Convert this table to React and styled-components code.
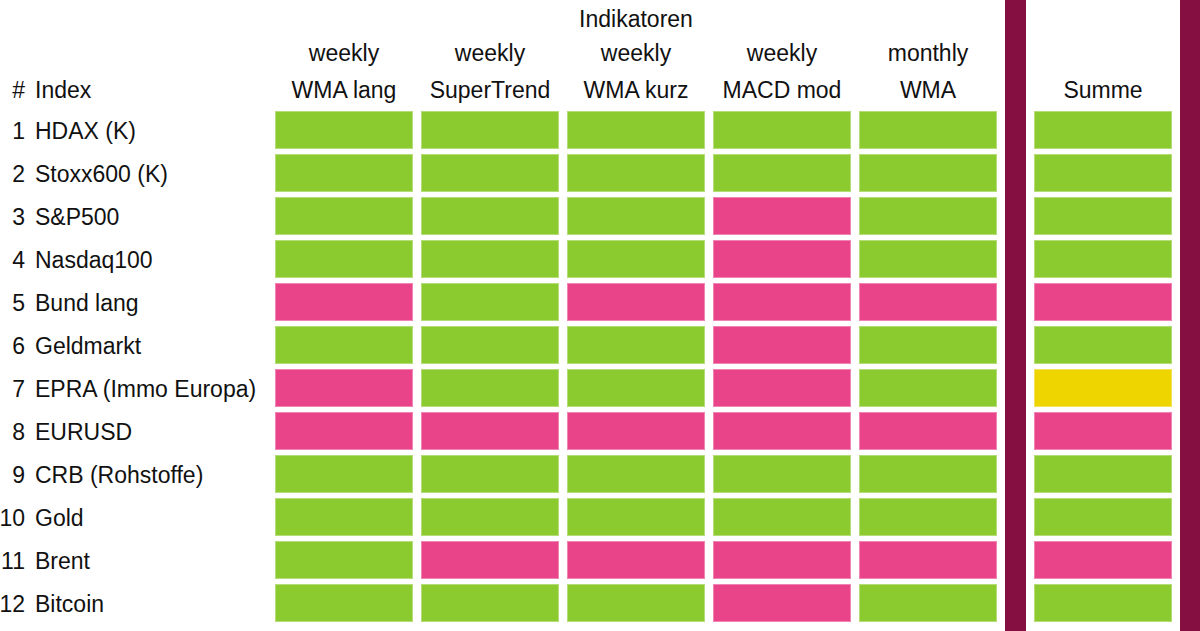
import React from "react";
import styled, { createGlobalStyle } from "styled-components";

const GlobalStyle = createGlobalStyle`
  html, body {
    margin: 0;
    padding: 0;
    background: #fff;
  }
  body {
    font-family: "Liberation Sans", Arial, sans-serif;
    color: #111;
  }
`;

const COLORS = {
  g: "#8ccb2f",
  p: "#e9438a",
  y: "#eed500",
};

// first 3 rows are the header, last row is only filler so the bars reach the bottom
const Grid = styled.div`
  display: grid;
  grid-template-columns: 25px 234px repeat(5, 138px) 21px 138px 21px;
  grid-template-rows: 32px 30px 34px repeat(12, 38px) 4px;
  column-gap: 8px;
  row-gap: 5px;
  width: 1200px;
  height: 631px;
  font-size: 23px;
  overflow: hidden;
`;

const Title = styled.div`
  grid-column: 3 / 8;
  grid-row: 1;
  display: flex;
  align-items: center;
  justify-content: center;
  padding-top: 6px;
`;

const HeadCell = styled.div`
  grid-row: ${(p) => p.$row};
  grid-column: ${(p) => p.$col};
  display: flex;
  align-items: center;
  justify-content: ${(p) =>
    p.$align === "left" ? "flex-start" : p.$align === "right" ? "flex-end" : "center"};
  padding-left: ${(p) => (p.$align === "left" ? "2px" : "0")};
  padding-top: 3px;
  white-space: nowrap;
`;

const Num = styled.div`
  grid-row: ${(p) => p.$row};
  grid-column: 1;
  display: flex;
  align-items: center;
  justify-content: flex-end;
  padding-top: 3px;
  white-space: nowrap;
`;

const Label = styled.div`
  grid-row: ${(p) => p.$row};
  grid-column: 2;
  display: flex;
  align-items: center;
  padding: 3px 0 0 2px;
  white-space: nowrap;
`;

const Cell = styled.div`
  grid-row: ${(p) => p.$row};
  grid-column: ${(p) => p.$col};
  background: ${(p) => COLORS[p.$c]};
  box-shadow: inset 0 0 0 1px rgba(255, 255, 255, 0.35);
`;

const Bar = styled.div`
  grid-row: 1 / -1;
  grid-column: ${(p) => p.$col};
  background: #840f40;
`;

const indicators = [
  ["weekly", "WMA lang"],
  ["weekly", "SuperTrend"],
  ["weekly", "WMA kurz"],
  ["weekly", "MACD mod"],
  ["monthly", "WMA"],
];

const rows = [
  ["HDAX (K)", "gggggg"],
  ["Stoxx600 (K)", "gggggg"],
  ["S&P500", "gggpgg"],
  ["Nasdaq100", "gggpgg"],
  ["Bund lang", "pgpppp"],
  ["Geldmarkt", "gggpgg"],
  ["EPRA (Immo Europa)", "pggpgy"],
  ["EURUSD", "pppppp"],
  ["CRB (Rohstoffe)", "gggggg"],
  ["Gold", "gggggg"],
  ["Brent", "gppppp"],
  ["Bitcoin", "gggpgg"],
];

export default function App() {
  return (
    <>
      <GlobalStyle />
      <Grid>
        <Title>Indikatoren</Title>
        {indicators.map(([a, b], i) => (
          <React.Fragment key={b}>
            <HeadCell $row={2} $col={i + 3}>{a}</HeadCell>
            <HeadCell $row={3} $col={i + 3}>{b}</HeadCell>
          </React.Fragment>
        ))}
        <HeadCell $row={3} $col={1} $align="right">#</HeadCell>
        <HeadCell $row={3} $col={2} $align="left">Index</HeadCell>
        <HeadCell $row={3} $col={9}>Summe</HeadCell>
        <Bar $col={8} />
        <Bar $col={10} />
        {rows.map(([name, cells], r) => (
          <React.Fragment key={name}>
            <Num $row={r + 4}>{r + 1}</Num>
            <Label $row={r + 4}>{name}</Label>
            {cells.split("").map((c, i) => (
              <Cell key={i} $c={c} $row={r + 4} $col={i < 5 ? i + 3 : 9} />
            ))}
          </React.Fragment>
        ))}
      </Grid>
    </>
  );
}
